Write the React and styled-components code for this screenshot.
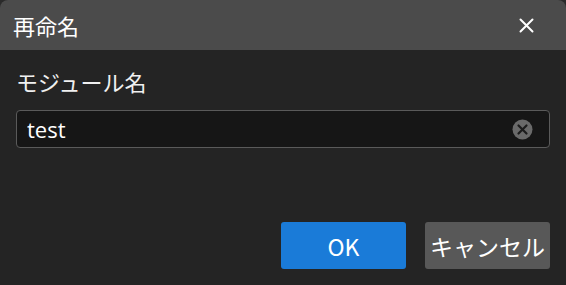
import React, { useState } from "react";
import styled, { createGlobalStyle } from "styled-components";

const GlobalStyle = createGlobalStyle`
  html, body {
    margin: 0;
    padding: 0;
    background: #2a2a2a;
  }
  #root {
    width: 566px;
    height: 285px;
  }
`;

const font = `"Noto Sans CJK JP", "Noto Sans", sans-serif`;

const Dialog = styled.div`
  width: 566px;
  height: 285px;
  display: flex;
  flex-direction: column;
  background: #242424;
  border-radius: 8px 8px 0 0;
  overflow: hidden;
  font-family: ${font};
  color: #f2f2f2;
`;

const Header = styled.div`
  height: 50px;
  flex-shrink: 0;
  display: flex;
  align-items: center;
  justify-content: space-between;
  padding: 0 32px 0 13px;
  background: #4b4b4b;
  h1 {
    margin: 0;
    font-size: 22px;
    font-weight: 400;
    line-height: 1;
    color: #ffffff;
  }
`;

const CloseButton = styled.button`
  border: none;
  background: transparent;
  padding: 0;
  width: 15px;
  height: 15px;
  display: flex;
  cursor: pointer;
  svg {
    width: 15px;
    height: 15px;
  }
`;

const Body = styled.div`
  flex: 1;
  display: flex;
  flex-direction: column;
  padding: 17px 16px 16px 16px;
`;

const Label = styled.label`
  font-size: 22px;
  line-height: 28px;
  color: #f0f0f0;
  margin-bottom: 15px;
`;

const InputWrapper = styled.div`
  height: 38px;
  box-sizing: border-box;
  display: flex;
  align-items: center;
  border: 1.5px solid #5a5a5a;
  border-radius: 4px;
  background: #161616;
  padding: 0 16px 0 10px;
  input {
    flex: 1;
    min-width: 0;
    border: none;
    outline: none;
    background: transparent;
    color: #ffffff;
    font-family: "Open Sans", "Noto Sans", sans-serif;
    font-size: 22px;
    padding: 0;
    caret-color: #ffffff;
  }
`;

const ClearIcon = styled.span`
  width: 21px;
  height: 21px;
  display: flex;
  svg {
    width: 21px;
    height: 21px;
  }
`;

const Footer = styled.div`
  margin-top: auto;
  display: flex;
  justify-content: flex-end;
  gap: 19px;
`;

const Button = styled.button`
  width: 125px;
  height: 47px;
  border: none;
  border-radius: 3px;
  font-family: ${font};
  font-size: 23px;
  color: #ffffff;
  padding: 0;
  background: ${(p) => (p.$primary ? "#1a7bd8" : "#585858")};
  cursor: pointer;
`;

export default function App() {
  const [value, setValue] = useState("test");
  return (
    <>
      <GlobalStyle />
      <Dialog>
        <Header>
          <h1>再命名</h1>
          <CloseButton aria-label="close">
            <svg viewBox="0 0 15 15">
              <path
                d="M1.5 1.5 L13.5 13.5 M13.5 1.5 L1.5 13.5"
                stroke="#ffffff"
                strokeWidth="2"
                strokeLinecap="round"
              />
            </svg>
          </CloseButton>
        </Header>
        <Body>
          <Label>モジュール名</Label>
          <InputWrapper>
            <input
              value={value}
              onChange={(e) => setValue(e.target.value)}
              autoFocus
            />
            <ClearIcon>
              <svg viewBox="0 0 21 21">
                <circle cx="10.5" cy="10.5" r="10" fill="#6a6a6a" />
                <path
                  d="M6.5 6.5 L14.5 14.5 M14.5 6.5 L6.5 14.5"
                  stroke="#1c1c1c"
                  strokeWidth="2.2"
                  strokeLinecap="round"
                />
              </svg>
            </ClearIcon>
          </InputWrapper>
          <Footer>
            <Button $primary>OK</Button>
            <Button>キャンセル</Button>
          </Footer>
        </Body>
      </Dialog>
    </>
  );
}
